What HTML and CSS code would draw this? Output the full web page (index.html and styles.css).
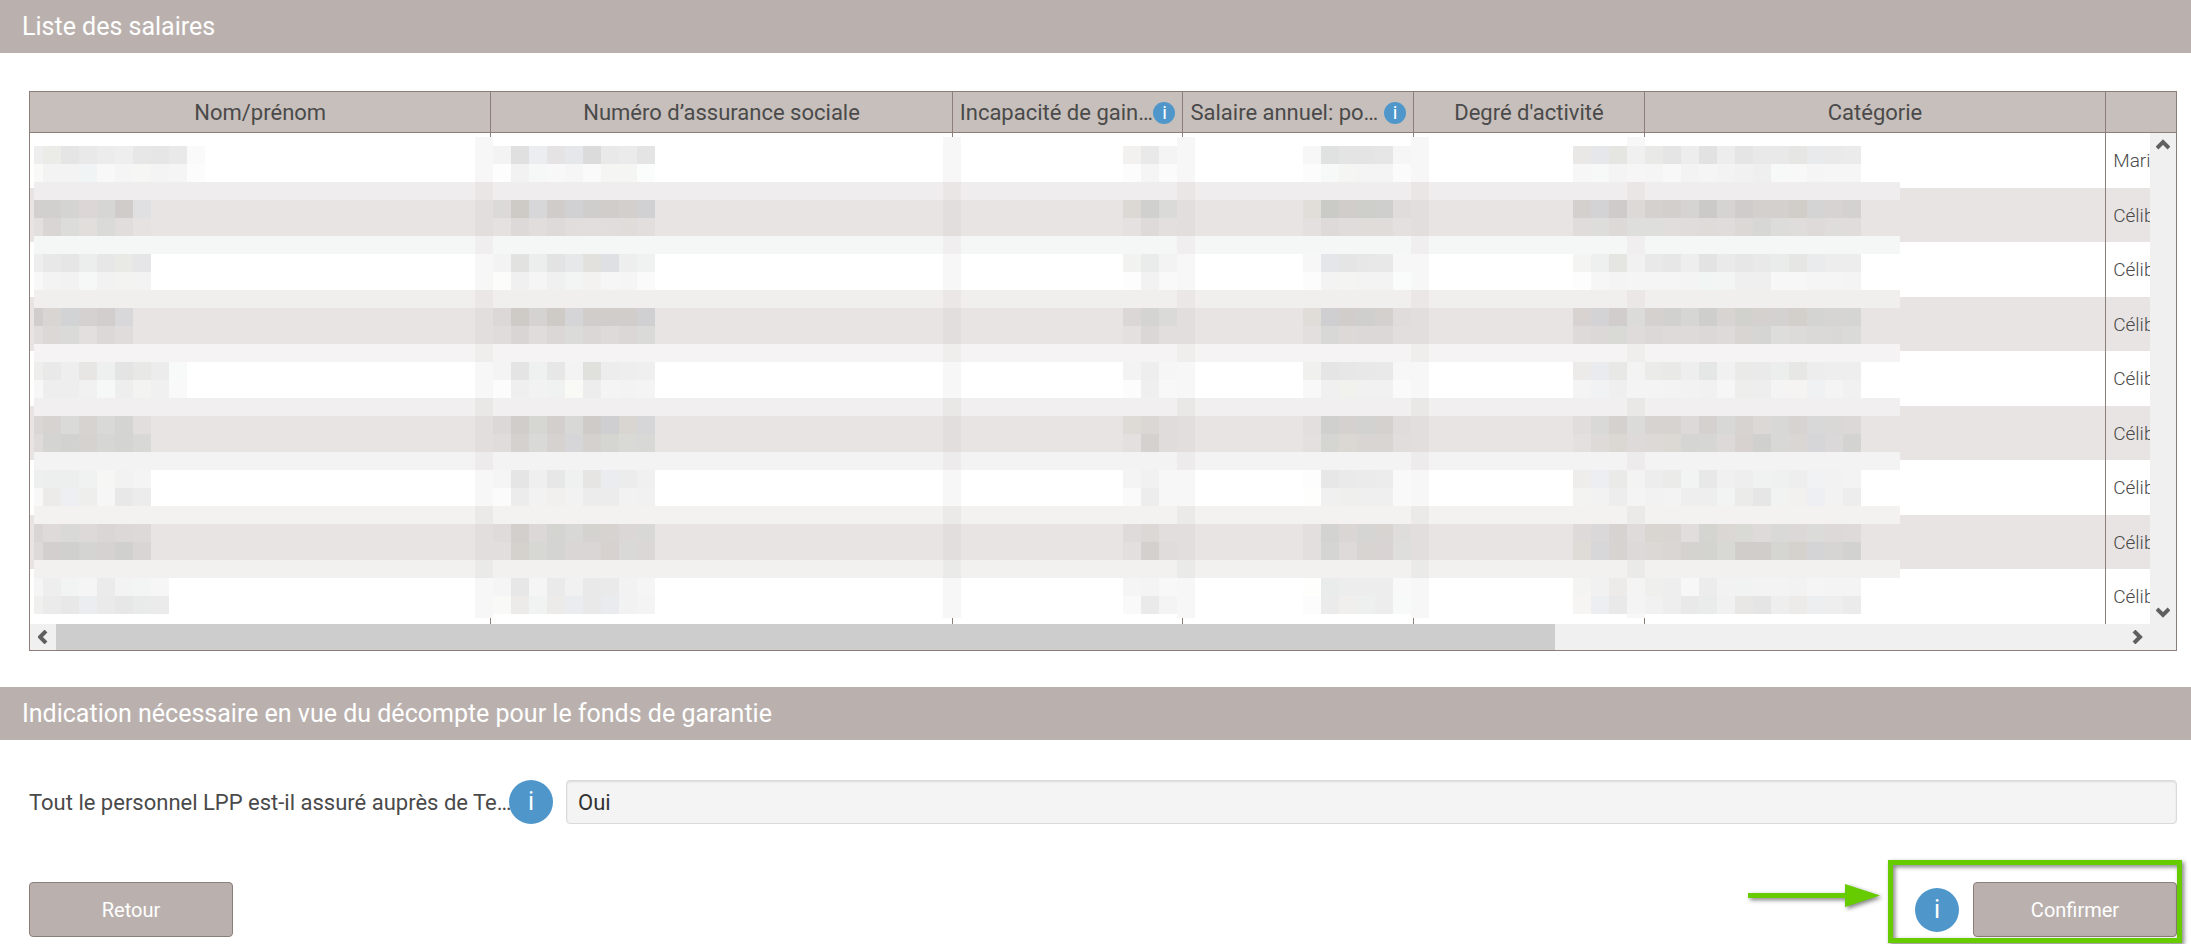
FILE: index.html
```html
<!DOCTYPE html>
<html lang="fr">

<head>
    <meta charset="UTF-8">
    <meta name="viewport" content="width=device-width, initial-scale=1.0">
    <title>Liste des salaires</title>
    <link rel="stylesheet" href="styles.css">
</head>

<body>
    <!-- Liste des salaires -->
    <section class="section">
        <h2 class="section-title">Liste des salaires</h2>

        <div class="grid">
            <table class="salary-table">
                <colgroup>
                    <col class="col-wide">
                    <col class="col-wide">
                    <col class="col-small">
                    <col class="col-small">
                    <col class="col-small">
                    <col class="col-wide">
                    <col>
                </colgroup>
                <thead>
                    <tr>
                        <th>Nom/prénom</th>
                        <th>Numéro d’assurance sociale</th>
                        <th>
                            <div class="th-info"><span>Incapacité de gain…</span><button class="info info-small" type="button">i</button></div>
                        </th>
                        <th>
                            <div class="th-info"><span>Salaire annuel: po…</span><button class="info info-small" type="button">i</button></div>
                        </th>
                        <th>Degré d'activité</th>
                        <th>Catégorie</th>
                        <th></th>
                    </tr>
                </thead>
                <tbody>
                    <tr><td></td><td></td><td></td><td></td><td></td><td></td><td>Mari</td></tr>
                    <tr><td></td><td></td><td></td><td></td><td></td><td></td><td>Célib</td></tr>
                    <tr><td></td><td></td><td></td><td></td><td></td><td></td><td>Célib</td></tr>
                    <tr><td></td><td></td><td></td><td></td><td></td><td></td><td>Célib</td></tr>
                    <tr><td></td><td></td><td></td><td></td><td></td><td></td><td>Célib</td></tr>
                    <tr><td></td><td></td><td></td><td></td><td></td><td></td><td>Célib</td></tr>
                    <tr><td></td><td></td><td></td><td></td><td></td><td></td><td>Célib</td></tr>
                    <tr><td></td><td></td><td></td><td></td><td></td><td></td><td>Célib</td></tr>
                    <tr><td></td><td></td><td></td><td></td><td></td><td></td><td>Célib</td></tr>
                </tbody>
            </table>

            <!-- données masquées -->
            <svg id="mask" class="mask" width="1866" height="481" viewBox="34 137 1866 481" shape-rendering="crispEdges"></svg>

            <!-- barre verticale -->
            <div class="scroll-v">
                <svg width="14" height="11" viewBox="0 0 14 11"><path d="M1 9L7 3L13 9" /></svg>
                <svg width="14" height="11" viewBox="0 0 14 11"><path d="M1 2L7 8L13 2" /></svg>
            </div>

            <!-- barre horizontale -->
            <div class="scroll-h">
                <span class="scroll-arrow"><svg width="11" height="14" viewBox="0 0 11 14"><path d="M8 1L2 7L8 13" /></svg></span>
                <div class="scroll-track">
                    <div class="scroll-thumb"></div>
                </div>
                <span class="scroll-arrow"><svg width="11" height="14" viewBox="0 0 11 14"><path d="M2 1L8 7L2 13" /></svg></span>
            </div>
        </div>
    </section>

    <!-- Fonds de garantie -->
    <section class="section">
        <h2 class="section-title">Indication nécessaire en vue du décompte pour le fonds de garantie</h2>

        <div class="field">
            <label class="field-label" for="personnel">Tout le personnel LPP est-il assuré auprès de Te…</label>
            <button class="info" type="button">i</button>
            <input class="field-input" id="personnel" type="text" value="Oui" readonly>
        </div>
    </section>

    <div class="actions">
        <button class="button" type="button">Retour</button>
        <div class="confirm">
            <button class="info" type="button">i</button>
            <button class="button" type="button">Confirmer</button>
            <div class="highlight"></div>
            <svg class="arrow" width="142" height="32" viewBox="0 0 142 32">
                <path d="M0 9H97V0L132 11.500L97 23V14H0Z" />
            </svg>
        </div>
    </div>

    <script src="mask.js"></script>
</body>

</html>
```
FILE: styles.css
```css
* {
    box-sizing: border-box;
}

body {
    margin: 0;
    background-color: #fff;
    color: #4a4a4a;
    font-family: Roboto, "Liberation Sans", sans-serif;
    font-size: 22px;
}

button,
input {
    font-family: inherit;
}

.section-title {
    margin: 0;
    padding: 0 22px;
    background-color: #bab1ae;
    color: #fff;
    font-size: 25px;
    font-weight: 400;
    line-height: 53px;
}

/* tableau */
.grid {
    position: relative;
    margin: 38px 14px 36px 29px;
    border: 1px solid #8c7f79;
    overflow: hidden;
}

.salary-table {
    width: 100%;
    table-layout: fixed;
    border-collapse: separate;
    border-spacing: 0;
}

.col-wide {
    width: 21.5%;
}

.col-small {
    width: 10.75%;
}

.salary-table th {
    height: 41px;
    padding: 2px 7px 0;
    background-color: #c7bfbb;
    border-right: 1px solid #8c7f79;
    border-bottom: 1px solid #8c7f79;
    font-weight: 400;
    line-height: 26px;
    white-space: nowrap;
}

.salary-table td {
    height: 55px;
    padding: 0 7px;
    border-right: 1px solid #8c7f79;
    font-size: 19px;
    font-weight: 300;
    white-space: nowrap;
    overflow: hidden;
}

.salary-table th:last-child,
.salary-table td:last-child {
    border-right: none;
}

.salary-table tbody tr:nth-child(even) {
    background-color: #e8e4e3;
}

.salary-table tbody tr:nth-child(even) td {
    height: 54px;
}

.th-info {
    display: flex;
    align-items: center;
    justify-content: space-between;
}

.mask {
    position: absolute;
    left: 4px;
    top: 45px;
}

/* bouton info */
.info {
    flex: none;
    width: 44px;
    height: 44px;
    padding: 0;
    border: none;
    border-radius: 50%;
    background-color: #4f97ca;
    color: #fff;
    font-size: 25px;
    line-height: 44px;
    text-align: center;
    cursor: pointer;
}

.info-small {
    width: 22px;
    height: 22px;
    font-size: 19px;
    line-height: 22px;
}

/* barres de défilement */
.scroll-v {
    position: absolute;
    top: 41px;
    right: 0;
    bottom: 26px;
    width: 26px;
    padding: 6px 0;
    display: flex;
    flex-direction: column;
    align-items: center;
    justify-content: space-between;
    background-color: #f0f0f0;
}

.scroll-h {
    display: flex;
    height: 26px;
    padding-right: 26px;
    background-color: #f0f0f0;
}

.scroll-arrow {
    display: flex;
    width: 26px;
    align-items: center;
    justify-content: center;
}

.scroll-track {
    flex: 1;
}

.scroll-thumb {
    width: 72.5%;
    height: 100%;
    background-color: #cdcdcd;
}

.scroll-v path,
.scroll-h path {
    fill: none;
    stroke: #606060;
    stroke-width: 4;
}

/* champ */
.field {
    display: flex;
    align-items: center;
    margin: 40px 14px 58px 29px;
}

.field-label {
    width: 480px;
    white-space: nowrap;
}

.field-input {
    flex: 1;
    height: 44px;
    margin-left: 13px;
    padding: 0 11px;
    border: 1px solid #dadada;
    border-radius: 4px;
    background-color: #f4f4f4;
    box-shadow: inset 0 1px 2px rgba(0, 0, 0, 0.1);
    color: #333;
    font-size: 22px;
}

/* boutons */
.actions {
    display: flex;
    justify-content: space-between;
    padding: 0 14px 7px 29px;
}

.button {
    width: 204px;
    height: 55px;
    border: 1px solid #8c7f79;
    border-radius: 4px;
    background-color: #bab1ae;
    color: #fff;
    font-size: 20px;
    cursor: pointer;
}

.confirm {
    position: relative;
    display: flex;
    align-items: center;
    gap: 14px;
}

.highlight {
    position: absolute;
    top: -22px;
    right: -5px;
    bottom: -6px;
    left: -27px;
    border: 5px solid #66cc00;
    filter: drop-shadow(2px 2px 2px rgba(0, 0, 0, 0.5));
    pointer-events: none;
}

.arrow {
    position: absolute;
    top: 2px;
    left: -167px;
    fill: #66cc00;
    filter: drop-shadow(2px 2px 2px rgba(0, 0, 0, 0.5));
}
```
FILE: mask.js
```js
// Masque des données personnelles : cases de 18px
const svg = document.getElementById("mask");
const SIZE = 18;
const TOP = 146;

// bandes entre les lignes et couleur des séparateurs dans ces bandes
const bands = ["efedee", "f5f6f6", "f0efed", "f5f3f4", "f1eff0", "f3", "f3f2f0", "f2f1ef"];
const bandStrips = ["eae6e5", "f0eeef", "ebe7e6", "efeeec", "e9e8e6", "eeebec", "ebeae8", "eaeae8"];
const strips = [475, 943, 1177, 1411, 1627];

// deux rangées de cases par ligne du tableau
const groups = [
    {
        x: 25, // nom
        rows: [
            "ee ebebe8 e5 e9 ec ee e7 e6 e9 fa",
            "f9f9f7 f3 f3 f1f4f4 f8 f5 f6f6f4 f4 f5 fc",
            "d2d0cf d2d0cf d4d4d2 dcd6d6 d6d6d4 cfccca e0e0e2",
            "e2dfde d8d5d4 dcdcdb e2dedb dadad9 e0dddc e5e2e1",
            "ee e8 e6 eceeed e7 e9e9e6 e6e6e9",
            "f8 f3 f2 f5f8f7 f2 f3f3f1 f3",
            "d0cecd d8d5d2 d1d3d4 d5d1d0 d1cecd d8d7d9",
            "e0dddc dbd8d5 dadad8 e2dfde dbd8d7 dfdcdb",
            "eeeeec e9 ee e7e6e4 eef0ef e4 e8e8e6 ec f7faf9",
            "f7 ee ee f1 f5f8f7 ee f3f3f1 f0 f9",
            "dad6d4 d7d3d1 dadad9 d7d3d0 d9d9d8 d4d4d2 e1dedd",
            "dfdbda d4d4d2 d2d2d0 d6d2cf d6d6d5 d4d4d3 d8d8d6",
            "eef0ef edefee edefee f0f1f1 f6f6f5 f2 f4",
            "f8 ecebe9 eeeff2 eeefed f6 e8 ec",
            "d9d5d4 dedad9 d9dad7 dcd9d8 dad6d5 dcd8d7 dcd9d8",
            "dcd9d8 d3cfce d0d0ce d4d4d2 d6d2d1 d0d0ce d9d5d4",
            "f5 ee f1f4f3 f5 eb f3 f3f5f5 f6",
            "f0f0ee eb e8 ecedf0 ea e7 e8ebea eb"
        ]
    },
    {
        x: 493, // numéro
        rows: [
            "f3 e0 ecedf0 e5e3e4 e6e7ea db e9 eb e4",
            "fd f2 f5f8f7 f8 f6 fa f5f5f4 f5f5f4 fbfdfd",
            "dbdad8 cecbc7 d7d6d8 cfccca d1d0d2 cfcecc d0cdcb d3cfcd d1d0d2",
            "e4e1e0 dcd9d8 e0dddc dddad9 e0dddc e1dedd e0dddc e0dcd9 e1dedd",
            "f3 e2e2e0 ebeeed e3 e7e8ea e3e1de dfe0e3 ee f0f2f1",
            "fcfcfa f0 f5 f0 f2f5f4 f4f2f0 f6 f5 fa",
            "dbd8d7 cecbc7 d4d3d1 cecbc7 d5d4d6 d1cdcb d1cdcb d1cdcb d0cfd1",
            "dfdcdb d8d5d4 dfdcdb dad7d6 dbdbd9 dad7d6 dddad9 dad7d6 dadad8",
            "f4 e4 eff1f0 e7 f3 e0e0dd ed ee ef",
            "fc ef f2 f0f2f2 f9f9f6 ed f4 f3 f4",
            "dbd8d7 d0cdcb d6d6d3 d3cfcd d8d8d6 cfcbc8 cfced0 d9d5d1 d6d6d8",
            "dfdcdb d5d1cf d9d9d8 d6d2d0 d6d5d8 d5d1cf d5d5d2 d9d9d6 d8d8d6",
            "f5 e5 ef e7 eef1f0 e6e5e3 eaecef ec f0",
            "fb ec f2 f2f0ee f2 ec ec f2 f1",
            "dedbda d2cfcd dcd8d7 d4d4d1 d8d8d6 d5d3d0 d6d3d1 dbd7d6 d8d8d6",
            "e1dedd d5d1cd d7d7d4 d4d5d2 dad6d5 dad6d5 d7d2d0 d9d9d7 dad7d6",
            "f5 e7 f5 ea f1 e9 ea f2 f5",
            "f9f9f7 ecebe9 f1f3f2 ecebe9 ebecef e9 eaebee f2 f4"
        ]
    },
    {
        x: 1123, // incapacité de gain
        rows: [
            "f2f1ef e9 f4", "fc f5 fb",
            "dcd9d5 d0d0ce dadad8", "e4e1e0 dddad9 e2dfde",
            "f2f2f0 eaeceb f3", "fd f2 f9",
            "dad7d6 d4d4d2 dadad8", "e3e0df dad7d6 e1dedd",
            "f3 ee f6", "fc ef f8",
            "dedbd7 dbd7d5 dfdcdb", "e3e0df d5d1cf dfdcdb",
            "f4 f1 f7", "fa ed f7",
            "dedbda dbd8d6 e1dedd", "e2dfde d4d0ce dfdcdb",
            "f5 f4 f8", "f9 ea f4"
        ]
    },
    {
        x: 1303, // salaire annuel
        rows: [
            "f7 dfe2e1 e4 e4 e6 f6",
            "fc f6f9f8 f5f5f3 f4 f4 fb",
            "e1deda cacac7 d0cdcb cececb cfcfcd dfdcdb",
            "e3e0df dddad9 dfdcdb dfdcda dfdcda e3e0df",
            "f7 e5e6e9 e5 e7 e8 f7",
            "fc f3 f4f4f2 f3 f3 f9fcfb",
            "e0ddd8 cfced0 d0cdca cfcfcd d3d0ce dfdcdb",
            "e2dfde d8d8d6 dcd9d7 dbd8d7 dbd8d7 e1dedd",
            "f0f0ee e5 e7 e8 e9 f7",
            "f8 f0 f1f1ee f1 f1 fa",
            "e2dfde d0d0ce d5d1cf d2d2d0 d5d1cf dfdcdb",
            "e3e0df d5d5d2 dbd7d3 d9d5d3 d9d5d3 e0dddc",
            "fd e7 ea eb ec f9",
            "fefefc f0 efefed ef ef f9",
            "e2dfde d3d4d1 d9d6d3 d5d6d3 d7d4d1 dedddb",
            "e2dfde d5d5d3 dddad9 d8d4d2 d9d4d3 dedfdc",
            "fefefc e9ecea ed ed ed f9",
            "fc eb f1efed edf0ee ed f8faf9"
        ]
    },
    {
        x: 1573, // degré d'activité et catégorie
        rows: [
            "e9e8e6 e6e7ea e5e5e2 f0 e9e9e7 e5 ed e2 ed e5 e9 e9 e6e6e4 e9eaec ea eb",
            "f7 f6f9f8 f4 f6 f5 f8 f3 f5 f3 f1 ef f6f9f8 f7f8f7 f5 f6 f6",
            "d4d0cd d3d2d4 cecbca dcd9d7 d4d1cf d2cfcd d5d4d2 cbcac8 d6d4d2 d0cccb d3d0ce d3d0ce d1cec9 d5d4d5 d6d3d2 d3d2d0",
            "dfdcdb dddddb dcd9d6 dededc dededc e0dddc dfdcdb dedbd8 dfdcdb dcd8d5 d7d7d5 dcdcda dedddb dddad9 dedddb dfdcdb",
            "f4f4f2 edf0ee e5e5e2 f1 e9 e7 ee e3 ea e7 e9 eaeceb e6e6e4 eaebec ed ed",
            "fd f6 f4 f5 f5 f5 f4 f1f5f4 f3f5f4 ef ef f7 f7 f5 f5 f4",
            "d8d3d0 d3d2d4 d1cdcc dbdbd9 d5d1cf d1d1cf d6d6d4 cececc d8d4d2 d1d1ce d4d1cf d3d2d0 d3cfca d4d4d2 d6d5d3 d5d5d3",
            "dddad9 dbd8d7 d9d9d6 dedbda dbd8d7 dddad9 dddad9 dbd8d7 dddad9 d8d5d2 d5d5d3 dddddb dcdbd9 dad9d8 dad8d7 dadad8",
            "ecebe9 eaebee e8e8e6 f3 ebebe9 e9e9e7 ee e4e7e6 f1 eaeae8 ea ebeeec e7e7e5 ed ee ee",
            "f4 f1f2f4 ef f4 f4 f3 f2 f1 f6 eeeeec ee f4 f6f4f2 eff1f3 f4 f1",
            "e0dddc d9d9d7 d4d1ce dbdbd9 d7d3d0 d7d3d1 dcd9d8 d5d1cf d8d8d6 d7d3d0 dbd8d6 d8d8d6 d7d3d0 d8d8d9 dad8d7 dbd8d7",
            "e3e0df dddad8 dbd7d3 dedad9 dcd9d6 dcd8d4 d5d6d4 d6d6d4 dcd9d8 d7d2cf d0d0ce d8d8d6 dad6d3 d6d5d8 dad8d9 d3d3d1",
            "eeedeb edeef1 eaeae8 f3 ed ebebe9 f2f4f4 e8 f0 ee f0f1f1 eff1f1 ee f1f2f3 f2 f3",
            "f3f3f1 f2 ed f4 f2 f3 ee ee f2f4f4 ebebe9 e6 f1f3f3 f2f1ef edeff3 f2 ed",
            "dddad9 dbd8d9 d6d3d1 dedbda d9d5d1 d8d5d2 e0dddc d4d4d1 dbd7d5 d9d9d6 dddad9 d9d9d7 dcd8d7 dbdcd9 dcd9d8 dddad9",
            "dfdcd8 d7d6d9 d6d3d0 dcd9d8 dcd8d6 dad6d4 d4d3d0 d3d3d0 d8d8d5 d1cdca d1cdcb d5d5d2 d5d1cd d4d3d5 d6d5d3 d2d3d0",
            "f4f4f2 f1 ecebe9 f4 efefed ee f7 ec f2 f1f2f2 f3 f3 f2 f5 f4 f4",
            "f6f5f3 eceef1 e9 f4 f1 ee e9 e9ecea f1 e8e7e5 e5 ee edebe9 eceef0 ee eb"
        ]
    }
];

function addRect(x, y, width, height, color) {
    const rect = document.createElementNS("http://www.w3.org/2000/svg", "rect");
    rect.setAttribute("x", x);
    rect.setAttribute("y", y);
    rect.setAttribute("width", width);
    rect.setAttribute("height", height);
    // "e8" = gris e8e8e8
    rect.setAttribute("fill", "#" + (color.length === 2 ? color.repeat(3) : color));
    svg.appendChild(rect);
}

// séparateurs
strips.forEach(x => {
    addRect(x, 137, SIZE, 481, "f7");
    for (let i = 1; i < 9; i += 2) {
        addRect(x, TOP + i * 54, SIZE, 36, "e2dedd");
    }
});

// bandes horizontales
bands.forEach((color, i) => {
    const y = TOP + 36 + i * 54;
    addRect(34, y, 1866, SIZE, color);
    strips.forEach(x => addRect(x, y, SIZE, SIZE, bandStrips[i]));
});

// cases
groups.forEach(group => {
    group.rows.forEach((row, i) => {
        const y = TOP + Math.floor(i / 2) * 54 + (i % 2) * SIZE;
        row.split(" ").forEach((color, j) => {
            addRect(group.x + j * SIZE, y, SIZE, SIZE, color);
        });
    });
});
```
